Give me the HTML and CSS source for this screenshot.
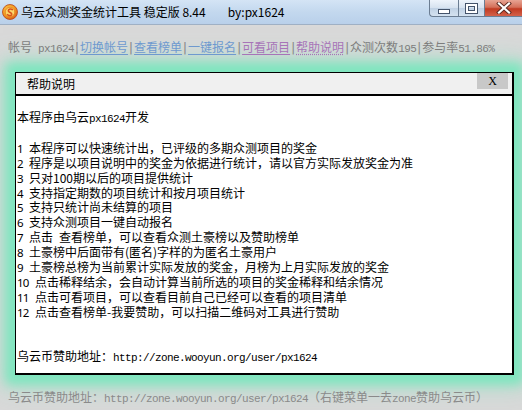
FILE: index.html
```html
<!DOCTYPE html>
<html lang="zh-CN">
<head>
<meta charset="utf-8">
<title>乌云众测奖金统计工具</title>
<link rel="stylesheet" href="styles.css">
</head>
<body>
<div class="window">
  <div class="titlebar">
    <svg class="appicon" width="16" height="16" viewBox="0 0 16 16">
      <defs>
        <radialGradient id="g1" cx="0.4" cy="0.35" r="0.7">
          <stop offset="0" stop-color="#fdd25a"/>
          <stop offset="0.6" stop-color="#f39a1e"/>
          <stop offset="1" stop-color="#d4561a"/>
        </radialGradient>
      </defs>
      <circle cx="8" cy="8" r="7.5" fill="url(#g1)" stroke="#b8461a" stroke-width="0.8"/>
      <circle cx="8" cy="8" r="4.8" fill="#fbd66a" stroke="#e07a20" stroke-width="0.8"/>
      <path d="M10.3 5.6 C8.6 4.3 5.6 5.2 6.6 7.3 C7.4 8.7 10.2 8.4 9.7 10.5 C9.2 12 6.8 11.8 5.7 10.7" fill="none" stroke="#d9501a" stroke-width="1.6" stroke-linecap="round"/>
    </svg>
    <span class="title">乌云众测奖金统计工具 稳定版 8.44</span>
    <span class="author">by:px1624</span>
    <div class="winbtns">
      <div class="wbtn min"><span class="minglyph"></span></div>
      <div class="wbtn max"><span class="maxglyph"></span></div>
      <div class="wbtn close">
        <svg width="16" height="12" viewBox="0 0 16 12">
          <path d="M3 1.5 L13 10.5 M13 1.5 L3 10.5" stroke="#5a2a22" stroke-width="4" stroke-linecap="square"/>
          <path d="M3 1.5 L13 10.5 M13 1.5 L3 10.5" stroke="#ffffff" stroke-width="2.2" stroke-linecap="square"/>
        </svg>
      </div>
    </div>
  </div>

  <div class="toolbar">
    <span class="muted">帐号</span><span class="mono muted"> px1624</span><span class="sep">|</span><span class="link">切换帐号</span><span class="sep">|</span><span class="link">查看榜单</span><span class="sep">|</span><span class="link">一键报名</span><span class="sep">|</span><span class="link visited">可看项目</span><span class="sep">|</span><span class="link visited focus">帮助说明</span><span class="sep">|</span><span class="muted">众测次数</span><span class="mono muted">195</span><span class="sep">|</span><span class="muted">参与率</span><span class="mono muted">51.86%</span>
  </div>

  <div class="dialog">
    <div class="dlg-title">
      <span>帮助说明</span>
      <span class="dlg-close">X</span>
    </div>
    <div class="dlg-body">
      <p class="intro">本程序由乌云<span class="mono">px1624</span>开发</p>
      <ol class="items">
        <li><span class="n">1</span>本程序可以快速统计出，已评级的多期众测项目的奖金</li>
        <li><span class="n">2</span>程序是以项目说明中的奖金为依据进行统计，请以官方实际发放奖金为准</li>
        <li><span class="n">3</span>只对100期以后的项目提供统计</li>
        <li><span class="n">4</span>支持指定期数的项目统计和按月项目统计</li>
        <li><span class="n">5</span>支持只统计尚未结算的项目</li>
        <li><span class="n">6</span>支持众测项目一键自动报名</li>
        <li><span class="n">7</span>点击<span class="sp"></span>查看榜单，可以查看众测土豪榜以及赞助榜单</li>
        <li><span class="n">8</span>土豪榜中后面带有(匿名)字样的为匿名土豪用户</li>
        <li><span class="n">9</span>土豪榜总榜为当前累计实际发放的奖金，月榜为上月实际发放的奖金</li>
        <li><span class="n n2">10</span>点击稀释结余，会自动计算当前所选的项目的奖金稀释和结余情况</li>
        <li><span class="n n2">11</span>点击可看项目，可以查看目前自己已经可以查看的项目清单</li>
        <li><span class="n n2">12</span>点击查看榜单-我要赞助，可以扫描二维码对工具进行赞助</li>
      </ol>
      <p class="donate">乌云币赞助地址：<span class="mono">http://zone.wooyun.org/user/px1624</span></p>
    </div>
  </div>

  <div class="status">乌云币赞助地址：<span class="mono">http://zone.wooyun.org/user/px1624</span>（右键菜单一去<span class="mono">zone</span>赞助乌云币）</div>
</div>
</body>
</html>
```

FILE: styles.css
```css
html, body {
  margin: 0;
  padding: 0;
}
body {
  width: 522px;
  height: 410px;
  overflow: hidden;
  background: #d9d9d9;
  font-family: "Noto Sans CJK SC", "Noto Sans", sans-serif;
  font-size: 12px;
  color: #000;
}
.window {
  width: 522px;
  height: 410px;
  overflow: hidden;
}

/* title bar */
.titlebar {
  height: 24px;
  display: flex;
  align-items: center;
  background: linear-gradient(to bottom, #d4e4f5 0%, #c3d8ee 50%, #b9d0ea 100%);
  border-bottom: 1px solid #9fb0c4;
  position: relative;
}
.appicon {
  margin-left: 2px;
  margin-right: 3px;
  flex: none;
}
.title {
  font-size: 12px;
  line-height: 16px;
  color: #000;
  white-space: nowrap;
}
.author {
  margin-left: 22px;
  font-size: 12px;
  line-height: 16px;
  white-space: nowrap;
}
.winbtns {
  position: absolute;
  top: 0;
  right: 0;
  display: flex;
  height: 18px;
}
.wbtn {
  height: 17px;
  display: flex;
  align-items: center;
  justify-content: center;
  border: 1px solid #6b7d92;
  border-top: none;
  box-sizing: border-box;
}
.wbtn.min {
  width: 29px;
  border-radius: 0 0 0 4px;
  background: linear-gradient(to bottom, #eef4fb 0%, #d6e2ef 50%, #c0d1e4 51%, #d4e2f0 100%);
  border-right: none;
}
.wbtn.max {
  width: 27px;
  background: linear-gradient(to bottom, #eef4fb 0%, #d6e2ef 50%, #c0d1e4 51%, #d4e2f0 100%);
}
.wbtn.close {
  width: 37px;
  border-left: none;
  border-right: none;
  background: linear-gradient(to bottom, #e7a493 0%, #d4705a 45%, #c13b22 55%, #d3614a 100%);
}
.minglyph {
  display: block;
  width: 10px;
  height: 3px;
  margin-top: 6px;
  background: #fff;
  border: 1px solid #44536a;
}
.maxglyph {
  display: block;
  width: 7px;
  height: 5px;
  background: transparent;
  border: 2px solid #fff;
  outline: 1px solid #44536a;
  box-shadow: inset 0 0 0 1px #44536a;
}

/* toolbar */
.toolbar {
  padding: 15px 0 0 8px;
  height: 15px;
  line-height: 14px;
  white-space: nowrap;
  color: #7d7d7d;
}
.mono {
  font-family: "Liberation Mono", "DejaVu Sans Mono", monospace;
  font-size: 11px;
  letter-spacing: -0.6px;
}
.muted {
  color: #7d7d7d;
}
.sep {
  display: inline-block;
  width: 6px;
  text-align: center;
  font-family: "DejaVu Sans", sans-serif;
  font-size: 13px;
  color: #8a8a8a;
}
.link {
  color: #6e99cf;
  text-decoration: underline;
  text-underline-offset: 2px;
}
.link.visited {
  color: #a774b8;
}
.link.focus {
  text-decoration: underline dotted;
}

/* dialog */
.dialog {
  margin: 17px 0 0 15px;
  width: 496px;
  border-left: 1px solid #000;
  border-top: 1px solid #000;
  border-right: 2px solid #000;
  border-bottom: 2px solid #000;
  background: #fff;
  box-shadow: 0 0 10px 9px #7fe6bf, 0 0 22px 12px rgba(128, 228, 190, 0.5);
}
.dlg-title {
  height: 21px;
  display: flex;
  align-items: center;
  justify-content: space-between;
  padding-left: 11px;
  background: #f0f0f0;
  border-bottom: 2px solid #000;
  line-height: 14px;
}
.dlg-close {
  width: 31px;
  height: 16px;
  margin-right: 4px;
  align-self: flex-start;
  background: #c8c8c8;
  display: flex;
  align-items: center;
  justify-content: center;
  font-family: "Liberation Serif", serif;
  font-size: 12px;
}
.dlg-body {
  height: 263px;
  padding-top: 14px;
  line-height: 13.9px;
}
.dlg-body p {
  margin: 0;
}
.intro {
  padding-left: 1px;
}
.items {
  list-style: none;
  margin: 13.9px 0 0 0;
  padding: 0 0 0 1px;
}
.items li {
  white-space: nowrap;
}
.n {
  display: inline-block;
  width: 12px;
  font-family: "Noto Sans", sans-serif;
  font-size: 11.5px;
}
.n.n2 {
  width: 18px;
  letter-spacing: -0.8px;
}
.sp {
  display: inline-block;
  width: 6px;
}
.donate {
  margin-top: 29px !important;
  padding-left: 1px;
}

/* status */
.status {
  margin: 15px 0 0 8px;
  line-height: 14px;
  color: #8a8a8a;
  white-space: nowrap;
}
```
